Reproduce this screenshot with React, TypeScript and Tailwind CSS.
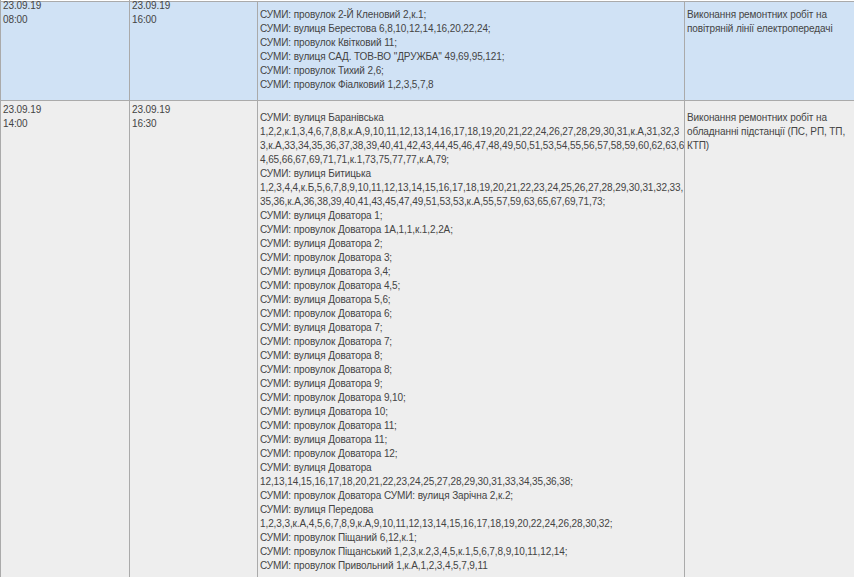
const row1 = [
  "СУМИ: провулок 2-Й Кленовий 2,к.1;",
  "СУМИ: вулиця Берестова 6,8,10,12,14,16,20,22,24;",
  "СУМИ: провулок Квітковий 11;",
  'СУМИ: вулиця САД. ТОВ-ВО "ДРУЖБА" 49,69,95,121;',
  "СУМИ: провулок Тихий 2,6;",
  "СУМИ: провулок Фіалковий 1,2,3,5,7,8",
];
const row2 = [
  "СУМИ: вулиця Баранівська",
  "1,2,2,к.1,3,4,6,7,8,8,к.А,9,10,11,12,13,14,16,17,18,19,20,21,22,24,26,27,28,29,30,31,к.А,31,32,3",
  "3,к.А,33,34,35,36,37,38,39,40,41,42,43,44,45,46,47,48,49,50,51,53,54,55,56,57,58,59,60,62,63,6",
  "4,65,66,67,69,71,71,к.1,73,75,77,77,к.А,79;",
  "СУМИ: вулиця Битицька",
  "1,2,3,4,4,к.Б,5,6,7,8,9,10,11,12,13,14,15,16,17,18,19,20,21,22,23,24,25,26,27,28,29,30,31,32,33,",
  "35,36,к.А,36,38,39,40,41,43,45,47,49,51,53,53,к.А,55,57,59,63,65,67,69,71,73;",
  "СУМИ: вулиця Доватора 1;",
  "СУМИ: провулок Доватора 1А,1,1,к.1,2,2А;",
  "СУМИ: вулиця Доватора 2;",
  "СУМИ: провулок Доватора 3;",
  "СУМИ: вулиця Доватора 3,4;",
  "СУМИ: провулок Доватора 4,5;",
  "СУМИ: вулиця Доватора 5,6;",
  "СУМИ: провулок Доватора 6;",
  "СУМИ: вулиця Доватора 7;",
  "СУМИ: провулок Доватора 7;",
  "СУМИ: вулиця Доватора 8;",
  "СУМИ: провулок Доватора 8;",
  "СУМИ: вулиця Доватора 9;",
  "СУМИ: провулок Доватора 9,10;",
  "СУМИ: вулиця Доватора 10;",
  "СУМИ: провулок Доватора 11;",
  "СУМИ: вулиця Доватора 11;",
  "СУМИ: провулок Доватора 12;",
  "СУМИ: вулиця Доватора",
  "12,13,14,15,16,17,18,20,21,22,23,24,25,27,28,29,30,31,33,34,35,36,38;",
  "СУМИ: провулок Доватора СУМИ: вулиця Зарічна 2,к.2;",
  "СУМИ: вулиця Передова",
  "1,2,3,3,к.А,4,5,6,7,8,9,к.А,9,10,11,12,13,14,15,16,17,18,19,20,22,24,26,28,30,32;",
  "СУМИ: провулок Піщаний 6,12,к.1;",
  "СУМИ: провулок Піщанський 1,2,3,к.2,3,4,5,к.1,5,6,7,8,9,10,11,12,14;",
  "СУМИ: провулок Привольний 1,к.А,1,2,3,4,5,7,9,11",
];

function Lines({ items }: { items: string[] }) {
  return (
    <>
      {items.map((t, i) => (
        <div key={i} className="whitespace-nowrap">{t}</div>
      ))}
    </>
  );
}

export default function App() {
  return (
    <div className="h-[577px] w-[854px] overflow-hidden bg-white pt-px font-['Liberation_Sans',Arial,sans-serif] text-[10px] leading-[14px] tracking-[-0.1px] text-[#444444]">
      <div className="grid h-[99px] grid-cols-[129px_128px_427px_170px] border-t border-[#aaaaaa] bg-[#d0e2f5]">
        <div className="-mt-[3px] border-l border-[#aaaaaa] pl-[2px]">23.09.19<br />08:00</div>
        <div className="-mt-[3px] border-l border-[#aaaaaa] pl-[2px]">23.09.19<br />16:00</div>
        <div className="border-l border-[#aaaaaa] pl-[2px] pt-[6px]"><Lines items={row1} /></div>
        <div className="border-l border-[#aaaaaa] pl-[2px] pt-[6px]">Виконання ремонтних робіт на<br />повітряній лінії електропередачі</div>
      </div>
      <div className="grid h-[477px] grid-cols-[129px_128px_427px_170px] border-t border-[#aaaaaa] bg-[#eeeeee]">
        <div className="border-l border-[#aaaaaa] pl-[2px] pt-[2px]">23.09.19<br />14:00</div>
        <div className="border-l border-[#aaaaaa] pl-[2px] pt-[2px]">23.09.19<br />16:30</div>
        <div className="border-l border-[#aaaaaa] pl-[2px] pt-[10px]"><Lines items={row2} /></div>
        <div className="border-l border-[#aaaaaa] pl-[2px] pt-[10px]">Виконання ремонтних робіт на<br />обладнанні підстанції (ПС, РП, ТП,<br />КТП)</div>
      </div>
    </div>
  );
}
